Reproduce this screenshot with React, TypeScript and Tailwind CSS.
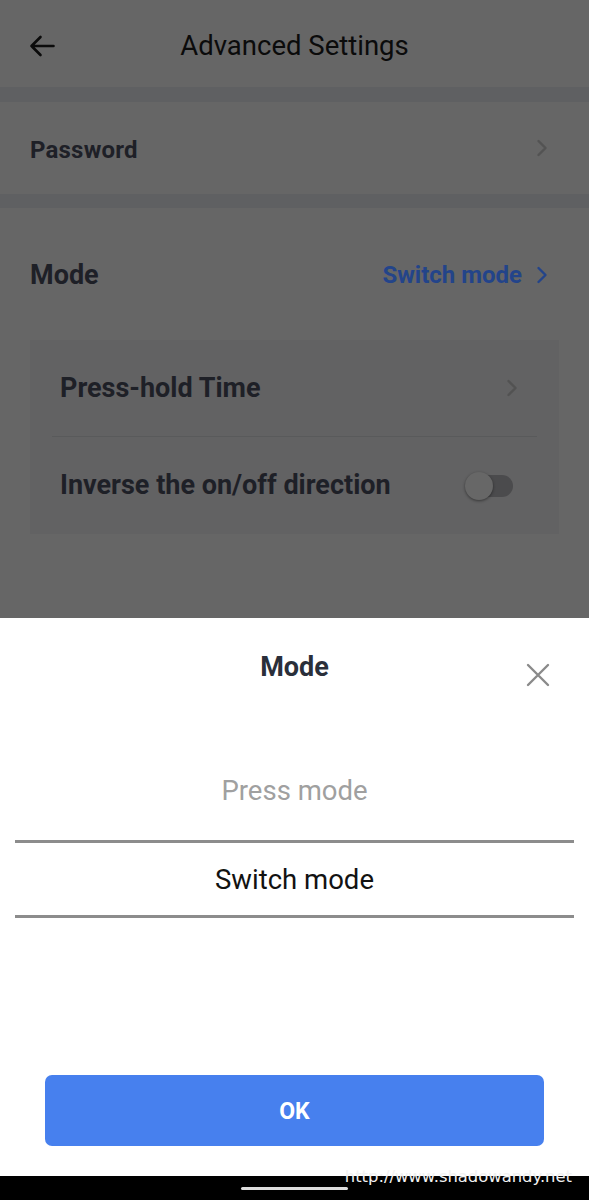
function Chevron({ className }: { className?: string }) {
  return (
    <svg width="12" height="18" viewBox="0 0 12 18" fill="none" className={className}>
      <path d="M2.5 2l7 7-7 7" stroke="currentColor" strokeWidth="2.4" strokeLinecap="round" strokeLinejoin="round" />
    </svg>
  )
}

function BackArrow() {
  return (
    <svg width="26" height="22" viewBox="0 0 26 22" fill="none">
      <path d="M24.5 11H2.5M11.5 2L2.5 11l9 9" stroke="#0b0b0b" strokeWidth="2.6" strokeLinecap="round" strokeLinejoin="round" />
    </svg>
  )
}

function CloseIcon() {
  return (
    <svg width="24" height="24" viewBox="0 0 24 24" fill="none">
      <path d="M2 2l20 20M22 2L2 22" stroke="#8a8a8a" strokeWidth="2.4" strokeLinecap="round" />
    </svg>
  )
}

export default function App() {
  return (
    <div className="relative w-[589px] h-[1200px] overflow-hidden bg-[#666666] font-[family-name:Roboto,sans-serif] flex flex-col">
      {/* dimmed page behind the sheet */}
      <div className="relative h-[1176px]">
        <div className="relative h-[87px] flex items-center justify-center pt-[4px]">
          <div className="absolute left-[29px] top-[35px]">
            <BackArrow />
          </div>
          <h1 className="text-[27.5px] text-[#0b0b0b] leading-[32px]">Advanced Settings</h1>
        </div>

        <div className="h-[15px] bg-[#5f6062]" />

        <div className="h-[92px] flex items-center justify-between pl-[30px] pr-[41px]">
          <span className="pt-[4px] text-[24px] font-bold text-[#1e2027] tracking-[0.2px]">Password</span>
          <Chevron className="text-[#535353]" />
        </div>

        <div className="h-[14px] bg-[#5f6062]" />

        <div className="pt-[49px] flex items-center justify-between pl-[30px] pr-[41px]">
          <span className="text-[27px] leading-[32px] font-bold text-[#1e2027]">Mode</span>
          <div className="flex items-center gap-[14px]">
            <span className="text-[24px] font-bold text-[#23448a]">Switch mode</span>
            <Chevron className="text-[#23448a]" />
          </div>
        </div>

        <div className="mt-[47px] mx-[30px] bg-[#626263]">
          <div className="h-[96px] flex items-center justify-between pl-[30px] pr-[41px]">
            <span className="text-[27px] font-bold text-[#1e2027]">Press-hold Time</span>
            <Chevron className="text-[#525252]" />
          </div>
          <div className="mx-[22px] h-px bg-[#595a5b]" />
          <div className="h-[97px] flex items-center justify-between pl-[30px] pr-[46px]">
            <span className="text-[27px] font-bold text-[#1e2027]">Inverse the on/off direction</span>
            <div className="relative w-[48px] h-[28px] flex items-center">
              <div className="ml-[6px] w-[42px] h-[22px] rounded-full bg-[#4b4b4d]" />
              <div className="absolute left-0 top-0 w-[28px] h-[28px] rounded-full bg-[#676767] shadow-[0_1px_3px_rgba(0,0,0,0.45)]" />
            </div>
          </div>
        </div>

        {/* bottom sheet */}
        <div className="absolute inset-x-0 bottom-0 h-[558px] bg-white flex flex-col">
          <div className="relative pt-[33px] text-center">
            <h2 className="text-[27px] leading-[32px] font-bold text-[#2a2f3a]">Mode</h2>
            <button type="button" className="absolute right-[39px] top-[45px]">
              <CloseIcon />
            </button>
          </div>

          <div className="mt-[93px] text-center text-[27.5px] leading-[30px] text-[#a0a0a0]">Press mode</div>
          <div className="mt-[34px] mx-[15px] h-[3px] bg-[#8c8c8c]" />
          <div className="mt-[22px] text-center text-[27.5px] leading-[30px] text-[#121212]">Switch mode</div>
          <div className="mt-[20px] mx-[15px] h-[3px] bg-[#8c8c8c]" />

          <button
            type="button"
            className="mt-auto mb-[30px] mx-[45px] h-[71px] pt-[4px] rounded-[7px] bg-[#4780ee] text-white text-[23px] font-bold"
          >
            OK
          </button>
        </div>
      </div>

      {/* system nav bar */}
      <div className="h-[24px] bg-black flex items-center justify-center">
        <div className="w-[107px] h-[3px] rounded-full bg-[#dddddd]" />
      </div>

      <div className="absolute right-[17px] bottom-[13px] text-[16.4px] leading-[20px] text-[#f2f2f2] font-[family-name:'DejaVu_Sans',sans-serif]">
        http://www.shadowandy.net
      </div>
    </div>
  )
}
